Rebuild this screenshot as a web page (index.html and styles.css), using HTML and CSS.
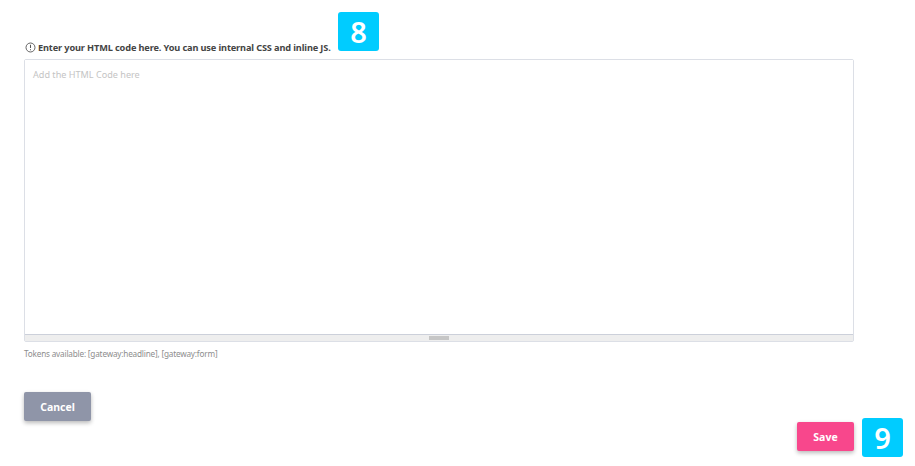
FILE: index.html
```html
<!DOCTYPE html>
<html lang="en">
<head>
  <meta charset="UTF-8" />
  <title>HTML Code</title>
  <link rel="stylesheet" href="styles.css">
</head>
<body>
  <div class="page">
    <p class="hint">
      <svg class="hint-icon" viewBox="0 0 12 12" width="11" height="11">
        <circle cx="6" cy="6" r="4.9" fill="none" stroke="#555" stroke-width="1"/>
        <path d="M6 3v3.6M6 8v1" fill="none" stroke="#555" stroke-width="1.1"/>
      </svg>
      Enter your HTML code here. You can use internal CSS and inline JS.
    </p>
    <div class="editor">
      <textarea class="code" placeholder="Add the HTML Code here"></textarea>
      <div class="grip-bar"><span class="grip"></span></div>
    </div>
    <p class="tokens">Tokens available: [gateway:headline], [gateway:form]</p>
    <button class="btn btn-cancel">Cancel</button>
    <div class="actions">
      <button class="btn btn-save">Save</button>
    </div>
  </div>
  <div class="badge badge-8">8</div>
  <div class="badge badge-9">9</div>
</body>
</html>
```

FILE: styles.css
```css
html, body { height: 100%; }
body { margin: 0; background: #fff; font-family: "Noto Sans", "Open Sans", sans-serif; overflow: hidden; }
.page { width: 830px; margin-left: 24px; padding-top: 40px; }
.hint { display: flex; align-items: center; gap: 2px; height: 14px; margin: 0 0 5px 1px; font-size: 9.2px; font-weight: 700; letter-spacing: -.13px; color: #444; }
.hint-icon { flex: none; }
.editor { height: 281px; border: 1px solid #dcdfe6; border-radius: 2px; display: flex; flex-direction: column; }
.code { flex: 1; border: none; border-bottom: 1px solid #ccd0da; outline: none; resize: none; margin: 0; padding: 8px 8px; font-family: inherit; font-size: 9.1px; }
.code::placeholder { color: #c4c4c4; }
.grip-bar { height: 6px; background: #eeeeee; display: flex; justify-content: center; align-items: center; }
.grip { width: 20px; height: 4px; background: #c6c6c6; }
.tokens { margin: 6px 0 0; font-size: 8.2px; letter-spacing: -.19px; color: #8d8d8d; }
.btn { display: block; border: none; border-radius: 2px; color: #fff; font-family: inherit; font-weight: 700; font-size: 10.5px; box-shadow: 0 2px 4px rgba(0,0,0,.28); }
.btn-cancel { width: 67px; height: 29px; margin-top: 33px; background: #8f95a8; }
.actions { display: flex; justify-content: flex-end; }
.btn-save { width: 57px; height: 29px; margin-top: 1px; background: #f8478c; }
.badge { position: absolute; width: 41px; height: 39px; border-radius: 3px; background: #00ccff; color: #fff; font-size: 29px; font-weight: 600; display: flex; align-items: center; justify-content: center; }
.badge-8 { left: 338px; top: 12px; }
.badge-9 { left: 862px; top: 418px; }
```
